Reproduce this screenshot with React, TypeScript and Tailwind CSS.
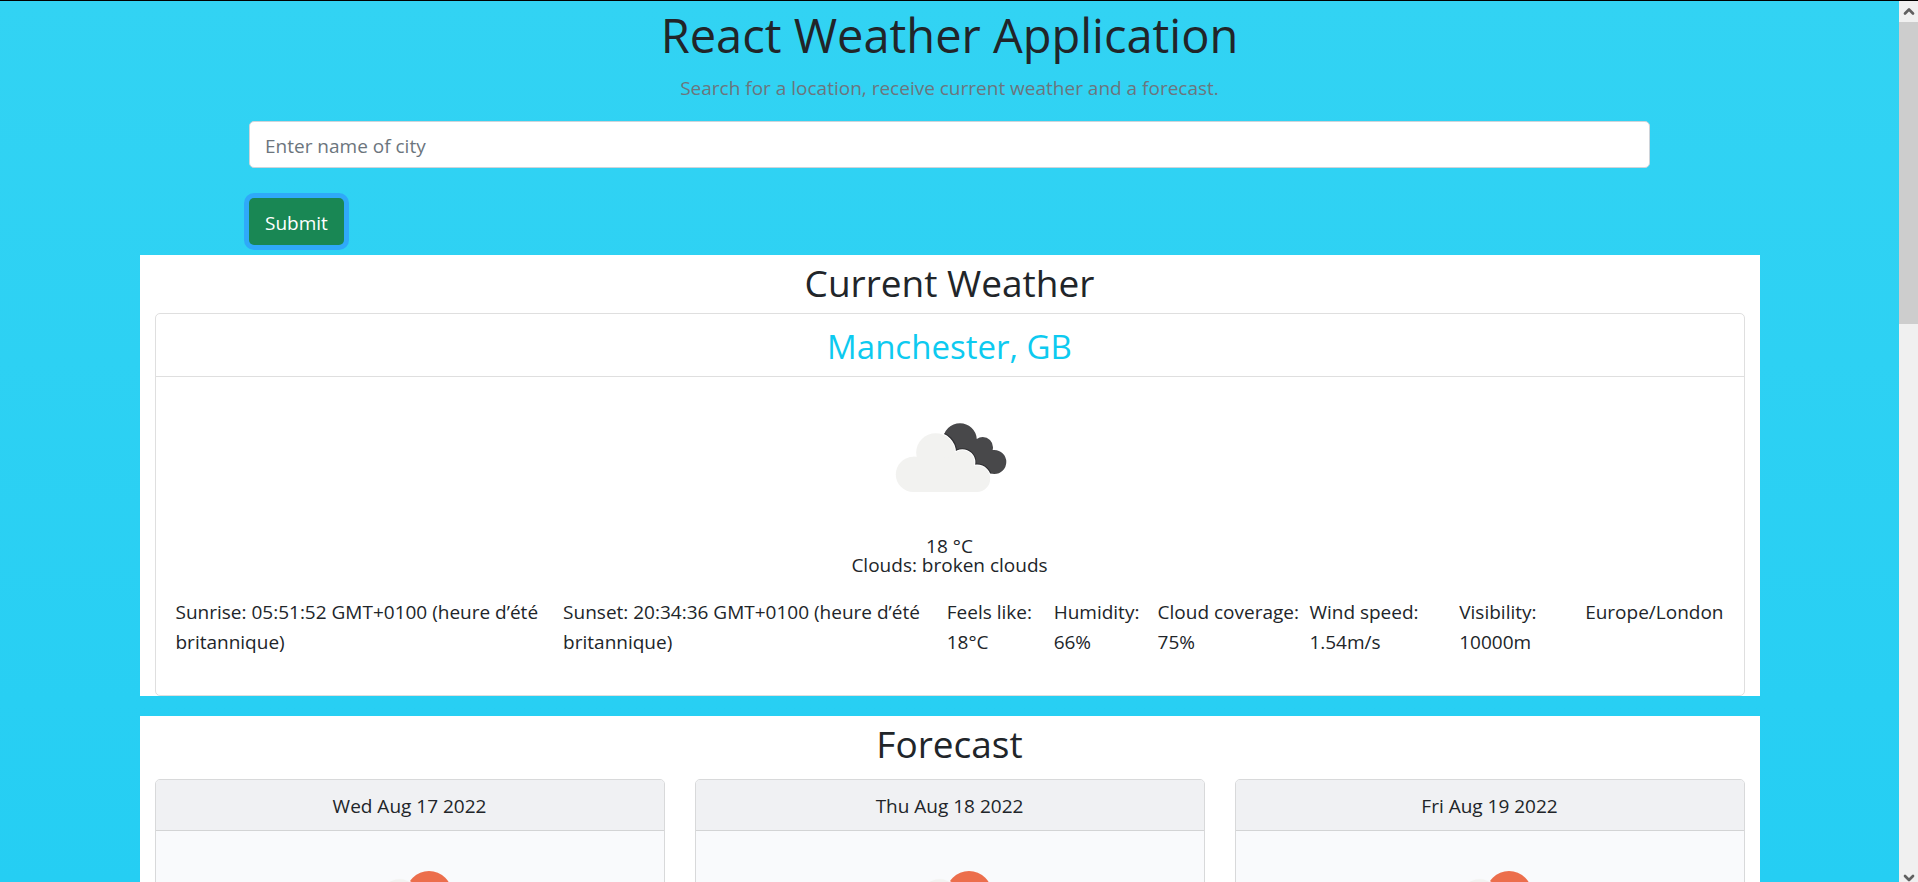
import { type FormEvent, useState } from "react";
import { ChevronDown, ChevronUp } from "lucide-react";

const details = [
  "Sunrise: 05:51:52 GMT+0100 (heure d’été britannique)",
  "Sunset: 20:34:36 GMT+0100 (heure d’été britannique)",
  "Feels like: 18°C",
  "Humidity: 66%",
  "Cloud coverage: 75%",
  "Wind speed: 1.54m/s",
  "Visibility: 10000m",
  "Europe/London",
];

const forecastDays = ["Wed Aug 17 2022", "Thu Aug 18 2022", "Fri Aug 19 2022"];

function LightCloud({ stroke }: { stroke: string }) {
  return (
    <>
      <g fill={stroke} stroke={stroke} strokeWidth="1.6">
        <circle cx="48.6" cy="55.6" r="19.6" />
        <circle cx="75.3" cy="65.3" r="12.3" />
        <circle cx="90" cy="81.7" r="13.3" />
      </g>
      <g fill="#f2f2f0">
        <circle cx="26.4" cy="77.4" r="17.6" />
        <circle cx="48.6" cy="55.6" r="19.4" />
        <circle cx="75.3" cy="65.3" r="12.1" />
        <circle cx="90" cy="81.7" r="13.2" />
        <path d="M26 95V59.8H50L75 62L88 70L91 95Z" />
      </g>
    </>
  );
}

function BrokenClouds() {
  return (
    <svg viewBox="0 0 125 125" className="h-[125px] w-[125px]" role="img" aria-label="Broken clouds">
      <clipPath id="dark-cloud">
        <circle cx="73" cy="43" r="16.8" />
        <circle cx="95.7" cy="50.3" r="10.3" />
        <circle cx="107.3" cy="65" r="12" />
        <path d="M73 43L95.7 50.3L107.3 65L103 76.5L80 76L58 50Z" />
      </clipPath>
      <g clipPath="url(#dark-cloud)">
        <rect width="125" height="125" fill="#48484a" />
        <g fill="none" stroke="#2f2f32" strokeWidth="3.6">
          <circle cx="48.6" cy="55.6" r="19.8" />
          <circle cx="75.3" cy="65.3" r="12.3" />
          <circle cx="90" cy="81.7" r="13.5" />
        </g>
      </g>
      <LightCloud stroke="#ffffff" />
    </svg>
  );
}

function SunAndCloud() {
  return (
    <svg viewBox="0 0 125 125" className="h-[125px] w-[125px]" role="img" aria-label="Sun behind a cloud">
      <circle cx="82" cy="43" r="23" fill="#ec6e4c" />
      <g transform="translate(4 -8)">
        <LightCloud stroke="#f8f9fb" />
      </g>
    </svg>
  );
}

function ForecastCard({ day }: { day: string }) {
  return (
    <article className="rounded-[5px] border border-[#d8d9da] bg-[#f9fafc] text-center">
      <h3 className="rounded-t-[4px] border-b border-[#d3d4d5] bg-[#f0f1f3] px-5 pt-[11px] pb-[9px]">{day}</h3>
      <div className="flex justify-center p-5">
        <SunAndCloud />
      </div>
    </article>
  );
}

export default function App() {
  const [city, setCity] = useState("");
  const onSubmit = (event: FormEvent) => event.preventDefault();

  return (
    <div className="flex h-screen overflow-hidden border-t border-black font-['Open_Sans','Noto_Sans',sans-serif] text-[19px] leading-[30px] text-[#212529]">
      <div className="min-w-0 flex-1 overflow-hidden bg-linear-to-b from-[#32d3f3] to-[#25cef3]">
        <header className="text-center">
          <h1 className="mb-2 pt-1 text-[47px] leading-[60px]">React Weather Application</h1>
          <p className="mb-[18px] text-[#6c757d]">Search for a location, receive current weather and a forecast.</p>
        </header>

        <form onSubmit={onSubmit} className="mx-auto max-w-[1401px]">
          <label htmlFor="city" className="sr-only">
            City
          </label>
          <input
            id="city"
            type="text"
            value={city}
            onChange={(event) => setCity(event.target.value)}
            placeholder="Enter name of city"
            className="block h-[47px] w-full rounded-[5px] border border-[#ced4da] bg-white px-[15px] pt-[2px] outline-none placeholder:text-[#6c757d]"
          />
          <button
            type="submit"
            className="mt-[30px] mb-[10px] block h-[47px] rounded-[5px] bg-[#198754] px-4 pt-[2px] text-white ring-[5px] ring-[#2fa9f9] outline-none"
          >
            Submit
          </button>
        </form>

        <main className="mx-auto flex max-w-[1620px] flex-col gap-5">
          <section className="bg-white px-[15px]">
            <h2 className="mb-[6px] pt-1 text-center text-[37px] leading-[48px]">Current Weather</h2>
            <div className="rounded-[5px] border border-[#dfdfdf]">
              <h3 className="border-b border-[#dfdfdf] px-5 pt-3 pb-2 text-center text-[33px] leading-[42px] text-[#0dcaf0]">
                Manchester, GB
              </h3>
              <div className="px-5 pt-5 pb-[38px]">
                <div className="flex flex-col items-center text-center leading-[19px]">
                  <BrokenClouds />
                  <p className="mt-[15px]">18 °C</p>
                  <p>Clouds: broken clouds</p>
                </div>
                <ul className="mt-[22px] grid grid-cols-[388fr_384fr_107fr_104fr_152fr_150fr_126fr_138fr]">
                  {details.map((detail) => (
                    <li key={detail} className="pr-2 last:pr-0">
                      {detail}
                    </li>
                  ))}
                </ul>
              </div>
            </div>
          </section>

          <section className="bg-white px-[15px]">
            <h2 className="mb-[11px] pt-1 text-center text-[37px] leading-[48px]">Forecast</h2>
            <div className="grid grid-cols-3 gap-[30px]">
              {forecastDays.map((day) => (
                <ForecastCard key={day} day={day} />
              ))}
            </div>
          </section>
        </main>
      </div>

      <div aria-hidden="true" className="flex w-[19px] flex-col items-center bg-[#f0f0f0] text-[#606060]">
        <ChevronUp className="h-[21px] w-4 shrink-0" strokeWidth={4} />
        <div className="h-[302px] w-full bg-[#cdcdcd]" />
        <ChevronDown className="mt-auto h-4 w-4 translate-y-1 shrink-0" strokeWidth={4} />
      </div>
    </div>
  );
}
